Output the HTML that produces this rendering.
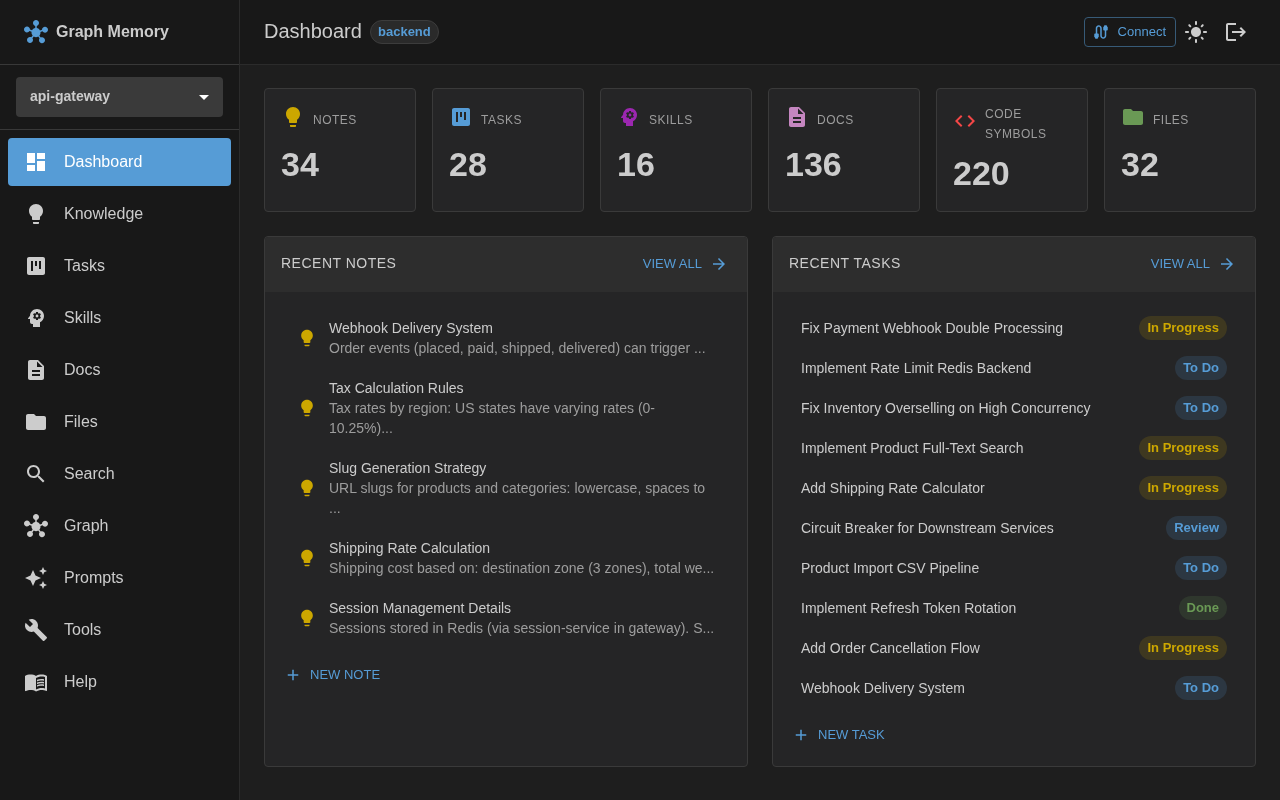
<!DOCTYPE html>
<html lang="en">
<head>
<meta charset="utf-8">
<title>Graph Memory - Dashboard</title>
<style>
*{box-sizing:border-box;margin:0;padding:0}
html,body{width:1280px;height:800px;overflow:hidden;background:#1e1e1e;color:#cccccc;font-family:"Liberation Sans",sans-serif;font-size:16px;line-height:1.5;-webkit-font-smoothing:antialiased}
body{will-change:transform}
svg{fill:currentColor;display:block}
.side{position:absolute;left:0;top:0;width:240px;height:800px;background:#181818;border-right:1px solid #2b2b2b}
.brand{position:absolute;left:0;top:0;width:239px;height:65px;border-bottom:1px solid #383838}
.brand svg{position:absolute;left:24px;top:20px;width:24px;height:24px;color:#569cd6}
.brand span{position:absolute;left:56px;top:20px;font-size:16px;font-weight:700;line-height:24px;color:#cccccc}
.proj{position:absolute;left:16px;top:77px;width:207px;height:40px;background:#3a3a3a;border-radius:4px}
.proj span{position:absolute;left:14px;top:9px;font-size:14px;font-weight:700;line-height:20px;color:#cccccc}
.proj svg{position:absolute;right:7px;top:8px;width:24px;height:24px;color:#fff}
.sdiv{position:absolute;left:0;top:129px;width:239px;height:1px;background:#383838}
.nav{position:absolute;left:8px;top:138px;width:223px}
.nav a{display:block;position:relative;height:48px;margin-bottom:4px;border-radius:4px;color:#cccccc;text-decoration:none}
.nav a svg{position:absolute;left:16px;top:12px;width:24px;height:24px;color:#cccccc}
.nav a span{position:absolute;left:56px;top:12px;font-size:16px;line-height:24px}
.nav a.on{background:#569cd6;color:#fff}
.nav a.on svg{color:#fff}
.top{position:absolute;left:240px;top:0;width:1040px;height:65px;background:#181818;border-bottom:1px solid #2b2b2b}
.top h1{position:absolute;left:24px;top:15px;font-size:20px;font-weight:400;line-height:32px;color:#cccccc}
.tag{position:absolute;left:130px;top:20px;height:24px;padding:0 7px;border:1px solid #3c3c3c;border-radius:12px;background:#2a2a2a;color:#569cd6;font-size:13px;font-weight:700;line-height:22px}
.conn{position:absolute;left:843.6px;top:17px;width:92.4px;height:30px;border:1px solid #375a77;border-radius:4px;color:#569cd6;font-size:13px;line-height:28px}
.conn svg{position:absolute;left:7px;top:5px;width:18px;height:18px}
.conn span{position:absolute;left:33px;top:0}
.ib{position:absolute;top:20px;width:24px;height:24px;color:#cccccc}
.stats{position:absolute;left:264px;top:88px;width:992px;display:flex;gap:16px}
.stat{position:relative;width:152px;height:124px;background:#252526;border:1px solid #3a3a3a;border-radius:4px}
.stat svg{position:absolute;left:16px;top:16px;width:24px;height:24px}
.stat .lb{position:absolute;left:48px;top:21px;font-size:12px;line-height:20px;letter-spacing:.5px;color:#9d9d9d;text-transform:uppercase}
.stat .n{position:absolute;left:16px;top:54px;font-size:34px;font-weight:700;line-height:42px;color:#cccccc}
.panel{position:absolute;top:236px;width:484px;height:531px;background:#252526;border:1px solid #3a3a3a;border-radius:4px;overflow:hidden}
.ph{position:absolute;left:0;top:0;width:482px;height:55px;background:#2d2d2d}
.ph .t{position:absolute;left:16px;top:14px;font-size:14px;line-height:24px;letter-spacing:.5px;color:#cccccc}
.ph .va{position:absolute;right:19px;top:15px;height:24px;color:#569cd6;font-size:13px;line-height:24px;padding-right:26px}
.ph .va svg{position:absolute;right:0;top:3px;width:18px;height:18px}
.note{position:relative;padding:10px 16px 10px 64px;width:482px}
.note svg{position:absolute;left:32px;top:50%;margin-top:-10px;width:20px;height:20px;color:#cca700}
.note b{display:block;font-weight:400;font-size:14px;line-height:20px;color:#cccccc}
.note i{display:block;font-style:normal;font-size:14px;line-height:20px;color:#9d9d9d}
.list{position:absolute;left:0;top:71px;width:482px}
.task{position:relative;height:40px;width:482px}
.task b{position:absolute;left:28px;top:10px;font-weight:400;font-size:14px;line-height:20px;color:#cccccc;white-space:nowrap}
.chip{position:absolute;right:28px;top:8px;height:24px;border-radius:12px;padding:0 8px;font-size:13px;font-weight:700;line-height:24px;white-space:nowrap}
.c-p{background:#3e3820;color:#cca700}
.c-t{background:#2c3742;color:#569cd6}
.c-d{background:#2f372d;color:#6a9955}
.newb{position:absolute;left:16px;height:31px;color:#569cd6;font-size:13px;line-height:31px;padding-left:29px}
.newb svg{position:absolute;left:3px;top:7px;width:18px;height:18px}
</style>
</head>
<body>
<div class="side">
  <div class="brand">
    <svg viewBox="0 0 24 24"><path d="M8.4 18.2c.38.5.6 1.120.6 1.800 0 1.660-1.340 3-3 3s-3-1.340-3-3 1.340-3 3-3c.44 0 .85.09 1.230.26l1.410-1.770c-.92-1.030-1.290-2.390-1.090-3.690l-2.030-.68c-.54.83-1.460 1.380-2.520 1.380-1.660 0-3-1.340-3-3s1.340-3 3-3 3 1.340 3 3v.07l2.030.68c.64-1.210 1.820-2.090 3.220-2.320V5.910C9.960 5.570 9 4.400 9 3c0-1.660 1.340-3 3-3s3 1.340 3 3c0 1.400-.96 2.570-2.250 2.910v2.160c1.400.23 2.580 1.110 3.220 2.320L18 9.710v-.07c0-1.660 1.340-3 3-3s3 1.340 3 3-1.340 3-3 3c-1.060 0-1.980-.55-2.520-1.380l-2.030.68c.2 1.290-.16 2.650-1.090 3.690l1.410 1.770c.38-.17.79-.26 1.230-.26 1.660 0 3 1.340 3 3s-1.340 3-3 3-3-1.340-3-3c0-.68.22-1.300.6-1.800l-1.410-1.770c-1.350.75-3.010.76-4.370 0L8.400 18.200z"/></svg>
    <span>Graph Memory</span>
  </div>
  <div class="proj"><span>api-gateway</span><svg viewBox="0 0 24 24"><path d="m7 10 5 5 5-5z"/></svg></div>
  <div class="sdiv"></div>
  <div class="nav">
    <a class="on"><svg viewBox="0 0 24 24"><path d="M3 13h8V3H3v10zm0 8h8v-6H3v6zm10 0h8V11h-8v10zm0-18v6h8V3h-8z"/></svg><span>Dashboard</span></a>
    <a><svg viewBox="0 0 24 24"><path d="M9 21c0 .55.45 1 1 1h4c.55 0 1-.45 1-1v-1H9v1zm3-19C8.140 2 5 5.140 5 9c0 2.380 1.190 4.470 3 5.740V17c0 .55.45 1 1 1h6c.55 0 1-.45 1-1v-2.260c1.810-1.270 3-3.360 3-5.740 0-3.860-3.140-7-7-7z"/></svg><span>Knowledge</span></a>
    <a><svg viewBox="0 0 24 24"><path d="M19 3H5c-1.100 0-2 .9-2 2v14c0 1.100.9 2 2 2h14c1.100 0 2-.9 2-2V5c0-1.100-.9-2-2-2zM9 17H7V7h2v10zm4-5h-2V7h2v5zm4 3h-2V7h2v8z"/></svg><span>Tasks</span></a>
    <a><svg viewBox="0 0 24 24"><path d="M13 8.570c-.79 0-1.430.64-1.430 1.430s.64 1.430 1.430 1.430 1.430-.64 1.430-1.430-.64-1.430-1.430-1.430z"/><path d="M13 3C9.250 3 6.200 5.940 6.020 9.640L4.100 12.200c-.25.33-.01.8.4.8H6v3c0 1.100.9 2 2 2h1v3h7v-4.680c2.360-1.120 4-3.530 4-6.320 0-3.870-3.130-7-7-7zm3 7c0 .13-.01.26-.02.39l.83.66c.08.06.1.16.05.25l-.8 1.390c-.05.09-.16.12-.24.09l-.99-.4c-.21.16-.43.29-.67.39L14 13.830c-.01.1-.1.17-.2.17h-1.600c-.1 0-.18-.07-.2-.17l-.15-1.060c-.25-.1-.47-.23-.68-.39l-.99.4c-.09.03-.2 0-.25-.09l-.8-1.390c-.05-.08-.03-.19.05-.25l.84-.66c-.01-.13-.02-.26-.02-.39s.02-.27.04-.39l-.85-.66c-.08-.06-.1-.16-.05-.26l.8-1.380c.05-.09.15-.12.24-.09l1 .4c.2-.15.43-.29.67-.39L12 6.170c.02-.1.1-.17.2-.17h1.600c.1 0 .18.07.2.17l.15 1.060c.24.1.46.23.67.39l1-.4c.09-.03.2 0 .24.09l.8 1.380c.05.09.03.2-.05.26l-.85.66c.03.12.04.25.04.39z"/></svg><span>Skills</span></a>
    <a><svg viewBox="0 0 24 24"><path d="M14 2H6c-1.100 0-1.990.9-1.990 2L4 20c0 1.100.89 2 1.990 2H18c1.100 0 2-.9 2-2V8l-6-6zm2 16H8v-2h8v2zm0-4H8v-2h8v2zm-3-5V3.500L18.500 9H13z"/></svg><span>Docs</span></a>
    <a><svg viewBox="0 0 24 24"><path d="M10 4H4c-1.100 0-1.990.9-1.990 2L2 18c0 1.100.9 2 2 2h16c1.100 0 2-.9 2-2V8c0-1.100-.9-2-2-2h-8l-2-2z"/></svg><span>Files</span></a>
    <a><svg viewBox="0 0 24 24"><path d="M15.500 14h-.79l-.28-.27C15.410 12.590 16 11.110 16 9.500 16 5.910 13.090 3 9.500 3S3 5.910 3 9.500 5.910 16 9.500 16c1.610 0 3.090-.59 4.230-1.570l.27.28v.79l5 4.990L20.490 19l-4.990-5zm-6 0C7.010 14 5 11.990 5 9.500S7.010 5 9.500 5 14 7.010 14 9.500 11.990 14 9.500 14z"/></svg><span>Search</span></a>
    <a><svg viewBox="0 0 24 24"><path d="M8.4 18.2c.38.5.6 1.120.6 1.800 0 1.660-1.340 3-3 3s-3-1.340-3-3 1.340-3 3-3c.44 0 .85.09 1.230.26l1.410-1.770c-.92-1.030-1.290-2.390-1.090-3.690l-2.030-.68c-.54.83-1.460 1.380-2.520 1.380-1.660 0-3-1.340-3-3s1.340-3 3-3 3 1.340 3 3v.07l2.030.68c.64-1.210 1.820-2.090 3.220-2.320V5.910C9.960 5.570 9 4.400 9 3c0-1.660 1.340-3 3-3s3 1.340 3 3c0 1.400-.96 2.570-2.250 2.910v2.160c1.400.23 2.580 1.110 3.220 2.320L18 9.710v-.07c0-1.660 1.340-3 3-3s3 1.340 3 3-1.340 3-3 3c-1.060 0-1.980-.55-2.520-1.380l-2.030.68c.2 1.290-.16 2.650-1.090 3.690l1.410 1.770c.38-.17.79-.26 1.230-.26 1.660 0 3 1.340 3 3s-1.340 3-3 3-3-1.340-3-3c0-.68.22-1.300.6-1.800l-1.410-1.770c-1.350.75-3.010.76-4.370 0L8.400 18.200z"/></svg><span>Graph</span></a>
    <a><svg viewBox="0 0 24 24"><path d="m19 9 1.250-2.750L23 5l-2.750-1.250L19 1l-1.250 2.750L15 5l2.750 1.250L19 9zm-7.500.5L9 4 6.500 9.500 1 12l5.500 2.500L9 20l2.500-5.500L17 12l-5.500-2.500zM19 15l-1.250 2.750L15 19l2.750 1.250L19 23l1.250-2.750L23 19l-2.750-1.250L19 15z"/></svg><span>Prompts</span></a>
    <a><svg viewBox="0 0 24 24"><path d="m22.700 19-9.100-9.100c.9-2.300.4-5-1.500-6.900-2-2-5-2.400-7.400-1.300L9 6 6 9 1.600 4.700C.4 7.100.9 10.100 2.900 12.100c1.900 1.900 4.600 2.400 6.900 1.500l9.100 9.100c.4.4 1 .4 1.400 0l2.300-2.300c.5-.4.5-1.100.1-1.400z"/></svg><span>Tools</span></a>
    <a><svg viewBox="0 0 24 24"><path d="M21 5c-1.110-.35-2.330-.5-3.500-.5-1.950 0-4.050.4-5.500 1.500-1.450-1.100-3.550-1.500-5.500-1.500S2.450 4.900 1 6v14.650c0 .25.25.5.5.5.1 0 .15-.05.25-.05C3.100 20.450 5.050 20 6.500 20c1.950 0 4.050.4 5.500 1.500 1.350-.85 3.800-1.500 5.500-1.500 1.650 0 3.350.3 4.750 1.050.1.05.15.05.25.05.25 0 .5-.25.5-.5V6c-.6-.45-1.250-.75-2-1zm0 13.500c-1.100-.35-2.300-.5-3.500-.5-1.700 0-4.150.65-5.500 1.500V8c1.350-.85 3.800-1.500 5.500-1.500 1.200 0 2.400.15 3.500.5v11.500z"/><path d="M17.500 10.500c.88 0 1.730.09 2.500.26V9.240c-.79-.15-1.640-.24-2.500-.24-1.700 0-3.240.29-4.500.83v1.660c1.130-.64 2.700-.99 4.500-.99zM13 12.490v1.660c1.130-.64 2.700-.99 4.500-.99.88 0 1.730.09 2.500.26V11.900c-.79-.15-1.640-.24-2.500-.24-1.700 0-3.240.3-4.500.83zm4.500 1.840c-1.700 0-3.240.29-4.500.83v1.660c1.130-.64 2.700-.99 4.500-.99.88 0 1.730.09 2.500.26v-1.520c-.79-.16-1.640-.24-2.500-.24z"/></svg><span>Help</span></a>
  </div>
</div>
<div class="top">
  <h1>Dashboard</h1>
  <div class="tag">backend</div>
  <div class="conn"><svg viewBox="0 0 24 24"><path d="M20 5V4c0-.55-.45-1-1-1h-2c-.55 0-1 .45-1 1v1h-1v4c0 .55.45 1 1 1h1v7c0 1.100-.9 2-2 2s-2-.9-2-2V7c0-2.210-1.790-4-4-4S5 4.790 5 7v7H4c-.55 0-1 .45-1 1v4h1v1c0 .55.45 1 1 1h2c.55 0 1-.45 1-1v-1h1v-4c0-.55-.45-1-1-1H7V7c0-1.100.9-2 2-2s2 .9 2 2v10c0 2.210 1.790 4 4 4s4-1.790 4-4v-7h1c.55 0 1-.45 1-1V5h-1z"/></svg><span>Connect</span></div>
  <svg class="ib" style="left:944px" viewBox="0 0 24 24"><path d="M12 7c-2.760 0-5 2.240-5 5s2.240 5 5 5 5-2.240 5-5-2.240-5-5-5zM2 13h2c.55 0 1-.45 1-1s-.45-1-1-1H2c-.55 0-1 .45-1 1s.45 1 1 1zm18 0h2c.55 0 1-.45 1-1s-.45-1-1-1h-2c-.55 0-1 .45-1 1s.45 1 1 1zM11 2v2c0 .55.45 1 1 1s1-.45 1-1V2c0-.55-.45-1-1-1s-1 .45-1 1zm0 18v2c0 .55.45 1 1 1s1-.45 1-1v-2c0-.55-.45-1-1-1s-1 .45-1 1zM5.990 4.580c-.39-.39-1.030-.39-1.410 0-.39.39-.39 1.030 0 1.410l1.060 1.060c.39.39 1.030.39 1.410 0s.39-1.030 0-1.410L5.990 4.580zm12.370 12.370c-.39-.39-1.030-.39-1.410 0-.39.39-.39 1.030 0 1.410l1.060 1.060c.39.39 1.030.39 1.410 0 .39-.39.39-1.030 0-1.410l-1.060-1.060zm1.060-10.960c.39-.39.39-1.030 0-1.410-.39-.39-1.030-.39-1.410 0l-1.060 1.060c-.39.39-.39 1.030 0 1.410s1.030.39 1.410 0l1.060-1.060zM7.050 18.360c.39-.39.39-1.030 0-1.410-.39-.39-1.030-.39-1.410 0l-1.060 1.060c-.39.39-.39 1.030 0 1.410s1.030.39 1.410 0l1.060-1.060z"/></svg>
  <svg class="ib" style="left:984px" viewBox="0 0 24 24"><path d="m17 7-1.410 1.410L18.170 11H8v2h10.170l-2.580 2.580L17 17l5-5zM4 5h8V3H4c-1.100 0-2 .9-2 2v14c0 1.100.9 2 2 2h8v-2H4V5z"/></svg>
</div>
<div class="stats">
  <div class="stat"><svg viewBox="0 0 24 24" style="color:#cca700"><path d="M9 21c0 .55.45 1 1 1h4c.55 0 1-.45 1-1v-1H9v1zm3-19C8.140 2 5 5.140 5 9c0 2.380 1.190 4.470 3 5.740V17c0 .55.45 1 1 1h6c.55 0 1-.45 1-1v-2.260c1.810-1.270 3-3.360 3-5.740 0-3.860-3.140-7-7-7z"/></svg><div class="lb">Notes</div><div class="n">34</div></div>
  <div class="stat"><svg viewBox="0 0 24 24" style="color:#569cd6"><path d="M19 3H5c-1.100 0-2 .9-2 2v14c0 1.100.9 2 2 2h14c1.100 0 2-.9 2-2V5c0-1.100-.9-2-2-2zM9 17H7V7h2v10zm4-5h-2V7h2v5zm4 3h-2V7h2v8z"/></svg><div class="lb">Tasks</div><div class="n">28</div></div>
  <div class="stat"><svg viewBox="0 0 24 24" style="color:#9c27b0"><path d="M13 8.570c-.79 0-1.430.64-1.430 1.430s.64 1.430 1.430 1.430 1.430-.64 1.430-1.430-.64-1.430-1.430-1.430z"/><path d="M13 3C9.250 3 6.200 5.940 6.020 9.640L4.100 12.200c-.25.33-.01.8.4.8H6v3c0 1.100.9 2 2 2h1v3h7v-4.680c2.360-1.120 4-3.530 4-6.320 0-3.870-3.130-7-7-7zm3 7c0 .13-.01.26-.02.39l.83.66c.08.06.1.16.05.25l-.8 1.390c-.05.09-.16.12-.24.09l-.99-.4c-.21.16-.43.29-.67.39L14 13.830c-.01.1-.1.17-.2.17h-1.600c-.1 0-.18-.07-.2-.17l-.15-1.060c-.25-.1-.47-.23-.68-.39l-.99.4c-.09.03-.2 0-.25-.09l-.8-1.390c-.05-.08-.03-.19.05-.25l.84-.66c-.01-.13-.02-.26-.02-.39s.02-.27.04-.39l-.85-.66c-.08-.06-.1-.16-.05-.26l.8-1.380c.05-.09.15-.12.24-.09l1 .4c.2-.15.43-.29.67-.39L12 6.170c.02-.1.1-.17.2-.17h1.600c.1 0 .18.07.2.17l.15 1.060c.24.1.46.23.67.39l1-.4c.09-.03.2 0 .24.09l.8 1.380c.05.09.03.2-.05.26l-.85.66c.03.12.04.25.04.39z"/></svg><div class="lb">Skills</div><div class="n">16</div></div>
  <div class="stat"><svg viewBox="0 0 24 24" style="color:#c586c0"><path d="M14 2H6c-1.100 0-1.990.9-1.990 2L4 20c0 1.100.89 2 1.990 2H18c1.100 0 2-.9 2-2V8l-6-6zm2 16H8v-2h8v2zm0-4H8v-2h8v2zm-3-5V3.500L18.500 9H13z"/></svg><div class="lb">Docs</div><div class="n">136</div></div>
  <div class="stat"><svg viewBox="0 0 24 24" style="color:#f44747;top:20px"><path d="M9.400 16.600 4.800 12l4.600-4.600L8 6l-6 6 6 6 1.400-1.400zm5.200 0 4.600-4.600-4.600-4.600L16 6l6 6-6 6-1.400-1.400z"/></svg><div class="lb" style="top:15px">Code<br>Symbols</div><div class="n" style="top:63px">220</div></div>
  <div class="stat"><svg viewBox="0 0 24 24" style="color:#6a9955"><path d="M10 4H4c-1.100 0-1.990.9-1.990 2L2 18c0 1.100.9 2 2 2h16c1.100 0 2-.9 2-2V8c0-1.100-.9-2-2-2h-8l-2-2z"/></svg><div class="lb">Files</div><div class="n">32</div></div>
</div>
<div class="panel" style="left:264px">
  <div class="ph"><div class="t">RECENT NOTES</div><div class="va">VIEW ALL<svg viewBox="0 0 24 24"><path d="m12 4-1.410 1.410L16.170 11H4v2h12.170l-5.580 5.590L12 20l8-8z"/></svg></div></div>
  <div class="list">
    <div class="note"><svg viewBox="0 0 24 24"><path d="M9 21c0 .55.45 1 1 1h4c.55 0 1-.45 1-1v-1H9v1zm3-19C8.140 2 5 5.140 5 9c0 2.380 1.190 4.470 3 5.740V17c0 .55.45 1 1 1h6c.55 0 1-.45 1-1v-2.260c1.810-1.270 3-3.360 3-5.740 0-3.860-3.140-7-7-7z"/></svg><b>Webhook Delivery System</b><i>Order events (placed, paid, shipped, delivered) can trigger ...</i></div>
    <div class="note"><svg viewBox="0 0 24 24"><path d="M9 21c0 .55.45 1 1 1h4c.55 0 1-.45 1-1v-1H9v1zm3-19C8.140 2 5 5.140 5 9c0 2.380 1.190 4.470 3 5.740V17c0 .55.45 1 1 1h6c.55 0 1-.45 1-1v-2.260c1.810-1.270 3-3.360 3-5.740 0-3.860-3.140-7-7-7z"/></svg><b>Tax Calculation Rules</b><i>Tax rates by region: US states have varying rates (0-<br>10.25%)...</i></div>
    <div class="note"><svg viewBox="0 0 24 24"><path d="M9 21c0 .55.45 1 1 1h4c.55 0 1-.45 1-1v-1H9v1zm3-19C8.140 2 5 5.140 5 9c0 2.380 1.190 4.470 3 5.740V17c0 .55.45 1 1 1h6c.55 0 1-.45 1-1v-2.260c1.810-1.270 3-3.360 3-5.740 0-3.860-3.140-7-7-7z"/></svg><b>Slug Generation Strategy</b><i>URL slugs for products and categories: lowercase, spaces to<br>...</i></div>
    <div class="note"><svg viewBox="0 0 24 24"><path d="M9 21c0 .55.45 1 1 1h4c.55 0 1-.45 1-1v-1H9v1zm3-19C8.140 2 5 5.140 5 9c0 2.380 1.190 4.470 3 5.740V17c0 .55.45 1 1 1h6c.55 0 1-.45 1-1v-2.260c1.810-1.270 3-3.360 3-5.740 0-3.860-3.140-7-7-7z"/></svg><b>Shipping Rate Calculation</b><i>Shipping cost based on: destination zone (3 zones), total we...</i></div>
    <div class="note"><svg viewBox="0 0 24 24"><path d="M9 21c0 .55.45 1 1 1h4c.55 0 1-.45 1-1v-1H9v1zm3-19C8.140 2 5 5.140 5 9c0 2.380 1.190 4.470 3 5.740V17c0 .55.45 1 1 1h6c.55 0 1-.45 1-1v-2.260c1.810-1.270 3-3.360 3-5.740 0-3.860-3.140-7-7-7z"/></svg><b>Session Management Details</b><i>Sessions stored in Redis (via session-service in gateway). S...</i></div>
  </div>
  <div class="newb" style="top:422px"><svg viewBox="0 0 24 24"><path d="M19 13h-6v6h-2v-6H5v-2h6V5h2v6h6v2z"/></svg>NEW NOTE</div>
</div>
<div class="panel" style="left:772px">
  <div class="ph"><div class="t">RECENT TASKS</div><div class="va">VIEW ALL<svg viewBox="0 0 24 24"><path d="m12 4-1.410 1.410L16.170 11H4v2h12.170l-5.580 5.590L12 20l8-8z"/></svg></div></div>
  <div class="list">
    <div class="task"><b>Fix Payment Webhook Double Processing</b><span class="chip c-p">In Progress</span></div>
    <div class="task"><b>Implement Rate Limit Redis Backend</b><span class="chip c-t">To Do</span></div>
    <div class="task"><b>Fix Inventory Overselling on High Concurrency</b><span class="chip c-t">To Do</span></div>
    <div class="task"><b>Implement Product Full-Text Search</b><span class="chip c-p">In Progress</span></div>
    <div class="task"><b>Add Shipping Rate Calculator</b><span class="chip c-p">In Progress</span></div>
    <div class="task"><b>Circuit Breaker for Downstream Services</b><span class="chip c-t">Review</span></div>
    <div class="task"><b>Product Import CSV Pipeline</b><span class="chip c-t">To Do</span></div>
    <div class="task"><b>Implement Refresh Token Rotation</b><span class="chip c-d">Done</span></div>
    <div class="task"><b>Add Order Cancellation Flow</b><span class="chip c-p">In Progress</span></div>
    <div class="task"><b>Webhook Delivery System</b><span class="chip c-t">To Do</span></div>
  </div>
  <div class="newb" style="top:482px"><svg viewBox="0 0 24 24"><path d="M19 13h-6v6h-2v-6H5v-2h6V5h2v6h6v2z"/></svg>NEW TASK</div>
</div>
</body>
</html>
